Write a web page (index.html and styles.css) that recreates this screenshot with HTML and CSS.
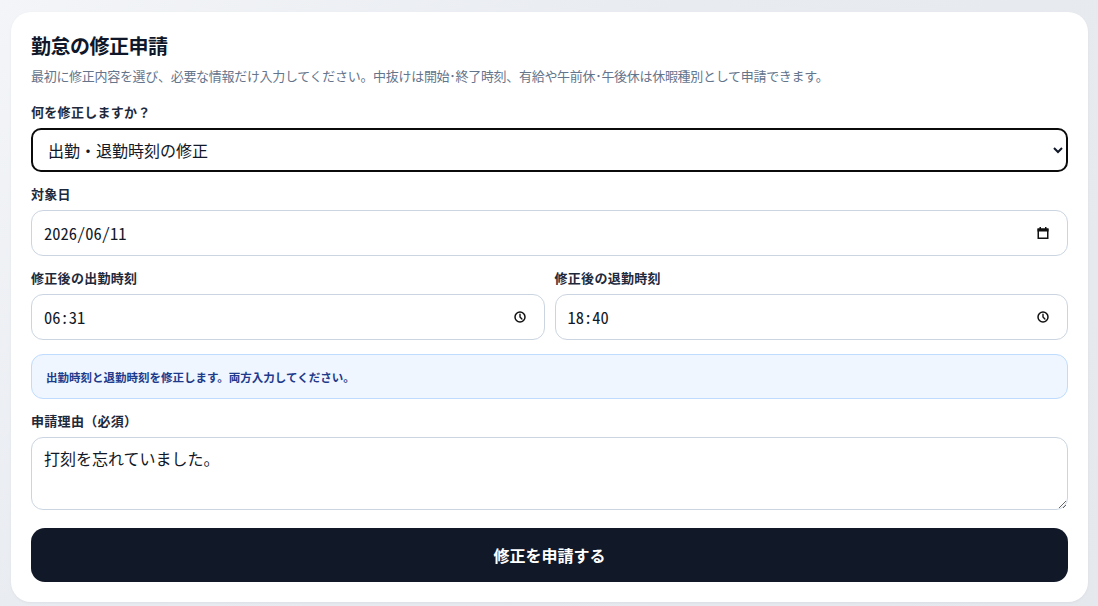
FILE: index.html
```html
<!DOCTYPE html>
<html lang="ja">
<head>
<meta charset="utf-8">
<title>勤怠の修正申請</title>
<link rel="stylesheet" href="styles.css">
</head>
<body>
<main class="card">
  <h1 class="title">勤怠の修正申請</h1>
  <p class="lead">最初に修正内容を選び、必要な情報だけ入力してください。中抜けは開始･終了時刻、有給や午前休･午後休は休暇種別として申請できます。</p>

  <form class="form">
    <div class="field">
      <label class="label" for="kind">何を修正しますか？</label>
      <select id="kind" class="select">
        <option>出勤・退勤時刻の修正</option>
      </select>
    </div>

    <div class="field">
      <label class="label" for="date">対象日</label>
      <div class="input">
        <input id="date" class="value" type="text" value="2026/06/11">
        <svg class="icon" width="14" height="14" viewBox="0 0 14 14" aria-hidden="true">
          <rect x="2.25" y="3.25" width="9.5" height="9" fill="none" stroke="#111" stroke-width="1.5"/>
          <rect x="1.5" y="2.5" width="11" height="3" fill="#111"/>
          <rect x="3.5" y="1" width="1.5" height="2" fill="#111"/>
          <rect x="9" y="1" width="1.5" height="2" fill="#111"/>
        </svg>
      </div>
    </div>

    <div class="row">
      <div class="field">
        <label class="label" for="in">修正後の出勤時刻</label>
        <div class="input">
          <input id="in" class="value" type="text" value="06:31">
          <svg class="icon" width="14" height="14" viewBox="0 0 14 14" aria-hidden="true">
            <circle cx="7" cy="7" r="5" fill="none" stroke="#111" stroke-width="1.5"/>
            <path d="M7 4.2V7L8.9 8.9" fill="none" stroke="#111" stroke-width="1.4" stroke-linecap="round"/>
          </svg>
        </div>
      </div>
      <div class="field">
        <label class="label" for="out">修正後の退勤時刻</label>
        <div class="input">
          <input id="out" class="value" type="text" value="18:40">
          <svg class="icon" width="14" height="14" viewBox="0 0 14 14" aria-hidden="true">
            <circle cx="7" cy="7" r="5" fill="none" stroke="#111" stroke-width="1.5"/>
            <path d="M7 4.2V7L8.9 8.9" fill="none" stroke="#111" stroke-width="1.4" stroke-linecap="round"/>
          </svg>
        </div>
      </div>
    </div>

    <div class="notice">出勤時刻と退勤時刻を修正します。両方入力してください。</div>

    <div class="field">
      <label class="label" for="reason">申請理由（必須）</label>
      <textarea id="reason" class="textarea">打刻を忘れていました。</textarea>
    </div>

    <button type="button" class="submit">修正を申請する</button>
  </form>
</main>
</body>
</html>
```

FILE: styles.css
```css
* {
  box-sizing: border-box;
}

html,
body {
  margin: 0;
}

body {
  padding: 12px 10px 12px 11px;
  background: linear-gradient(135deg, #f3f5f8 0%, #e8ebf0 40%, #e5e9ee 100%);
  font-family: "Noto Sans CJK JP", "Noto Sans", sans-serif;
  color: #0f172a;
}

.card {
  background: #ffffff;
  border-radius: 20px;
  padding: 20px;
  box-shadow: 0 1px 3px rgba(15, 23, 42, 0.05);
}

.title {
  margin: 0;
  font-size: 20px;
  line-height: 28px;
  font-weight: 700;
  letter-spacing: -0.5px;
  color: #0f172a;
}

.lead {
  margin: 6px 0 0;
  font-size: 13px;
  line-height: 20px;
  letter-spacing: -0.3px;
  color: #64748b;
}

.form {
  margin-top: 18px;
  display: flex;
  flex-direction: column;
  gap: 14px;
}

.field {
  display: flex;
  flex-direction: column;
  gap: 8px;
  min-width: 0;
}

.label {
  font-size: 13px;
  line-height: 16px;
  font-weight: 600;
  letter-spacing: 0.3px;
  color: #1e293b;
}

.row {
  display: grid;
  grid-template-columns: 1fr 1fr;
  gap: 10px;
}

.select {
  height: 44px;
  width: 100%;
  border: 2px solid #0b0b0b;
  border-radius: 10px;
  padding: 0 10px 0 11px;
  font-family: inherit;
  font-size: 16px;
  color: #111827;
  background: #ffffff;
}

.input {
  height: 46px;
  display: flex;
  align-items: center;
  gap: 8px;
  border: 1px solid #cbd5e1;
  border-radius: 12px;
  padding: 0 17px 0 12px;
  background: #ffffff;
}

.value {
  flex: 1;
  min-width: 0;
  border: 0;
  padding: 0;
  outline: none;
  background: transparent;
  font-family: "Noto Sans Mono CJK JP", "Noto Sans CJK JP", monospace;
  font-size: 16.5px;
  color: #111827;
}

.icon {
  flex: none;
  display: block;
}

.notice {
  height: 45px;
  display: flex;
  align-items: center;
  padding: 0 14px;
  border: 1px solid #bfdbfe;
  border-radius: 12px;
  background: #eff6ff;
  color: #1e3a8a;
  font-size: 11.5px;
  font-weight: 700;
}

.textarea {
  height: 73px;
  width: 100%;
  border: 1px solid #cbd5e1;
  border-radius: 12px;
  padding: 9px 12px;
  font-family: inherit;
  font-size: 16px;
  line-height: 22px;
  color: #111827;
  resize: vertical;
}

.submit {
  margin-top: 4px;
  height: 54px;
  width: 100%;
  border: 0;
  border-radius: 14px;
  background: #111827;
  color: #ffffff;
  font-family: inherit;
  font-size: 16px;
  font-weight: 700;
}
```
